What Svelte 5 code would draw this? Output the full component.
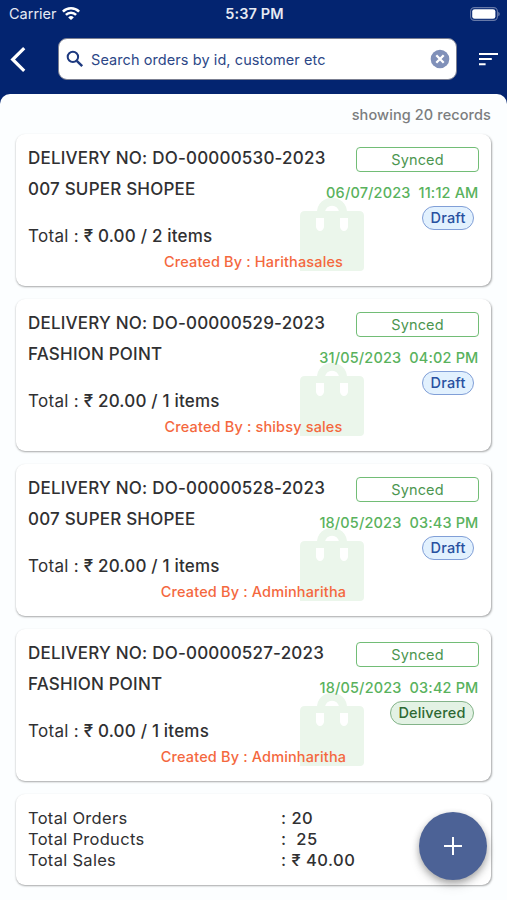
<script>
  const orders = [
    { no: 'DO-00000530-2023', customer: '007 SUPER SHOPEE', date: '06/07/2023', time: '11:12 AM', total: '0.00', items: 2, status: 'Draft', by: 'Harithasales' },
    { no: 'DO-00000529-2023', customer: 'FASHION POINT', date: '31/05/2023', time: '04:02 PM', total: '20.00', items: 1, status: 'Draft', by: 'shibsy sales' },
    { no: 'DO-00000528-2023', customer: '007 SUPER SHOPEE', date: '18/05/2023', time: '03:43 PM', total: '20.00', items: 1, status: 'Draft', by: 'Adminharitha' },
    { no: 'DO-00000527-2023', customer: 'FASHION POINT', date: '18/05/2023', time: '03:42 PM', total: '0.00', items: 1, status: 'Delivered', by: 'Adminharitha' }
  ];

  const totals = [
    { label: 'Total Orders', value: ': 20' },
    { label: 'Total Products', value: ':  25' },
    { label: 'Total Sales', value: ': ₹ 40.00' }
  ];
</script>

<div class="screen">
  <header>
    <div class="status-bar">
      <div class="carrier">
        <span>Carrier</span>
        <svg width="18" height="14" viewBox="0 0 18 14" fill="none" stroke="#fff" stroke-width="2.5">
          <path d="M.9 4.7a11.4 11.4 0 0 1 16.2 0" />
          <path d="M3.9 7.9a7.1 7.1 0 0 1 10.2 0" />
          <path d="M9 13.1 6.2 10.4a4 4 0 0 1 5.6 0z" fill="#fff" stroke="none" />
        </svg>
      </div>
      <span class="clock">5:37 PM</span>
      <svg class="battery" width="30" height="14" viewBox="0 0 30 14">
        <rect x="0.6" y="0.6" width="26.8" height="12.8" rx="3.8" fill="none" stroke="#6779a8" stroke-width="1.1" />
        <rect x="2.2" y="2.2" width="23.2" height="9.6" rx="2.4" fill="#fff" />
        <path d="M28.4 4.7c1.6.7 1.6 3.9 0 4.6z" fill="#8291b9" />
      </svg>
    </div>

    <div class="toolbar">
      <svg class="back" width="16" height="26" viewBox="0 0 16 26" fill="none" stroke="#fff" stroke-width="3.2">
        <path d="M14.2 2.2 2.7 13.5l11.5 11.3" />
      </svg>
      <div class="search">
        <svg width="18" height="18" viewBox="0 0 18 18" fill="none" stroke="#1d397f">
          <circle cx="6.9" cy="6.9" r="5.2" stroke-width="2" />
          <path d="m10.8 10.8 5.4 5.4" stroke-width="2.4" />
        </svg>
        <span class="placeholder">Search orders by id, customer etc</span>
        <svg width="20" height="20" viewBox="0 0 20 20">
          <circle cx="10" cy="10" r="9.3" fill="#8090b9" />
          <path d="m6.3 6.3 7.4 7.4m0-7.4-7.4 7.4" stroke="#fff" stroke-width="2.3" />
        </svg>
      </div>
      <svg class="sort" width="20" height="14" viewBox="0 0 20 14" fill="#fff">
        <path d="M0 .9h19v2H0zM0 6.1h12.8v2H0zM0 11.3h6.6v2H0z" />
      </svg>
    </div>
  </header>

  <main>
    <p class="count">showing 20 records</p>

    {#each orders as order}
      <article class="card">
        <svg class="bag" width="66" height="76" viewBox="0 0 66 76">
          <path d="M22 17c0-15 22-15 22 0" fill="none" stroke="#ebf6eb" stroke-width="8" />
          <path fill-rule="evenodd" fill="#ebf6eb" d="M6 15h54q5 0 5 5v51q0 4-4 4H1V20q0-5 5-5zM17 22v9q1 4 4 4t4-4v-9zM41 22v9q1 4 4 4t4-4v-9z" />
        </svg>
        <div class="row">
          <div class="info">
            <div class="line">DELIVERY NO: {order.no}</div>
            <div class="line customer">{order.customer}</div>
            <div class="line total"><span>Total :</span> ₹ {order.total} / {order.items} items</div>
          </div>
          <div class="meta">
            <div class="synced">Synced</div>
            <div class="date">{order.date}&nbsp; {order.time}</div>
            <div class="chip" class:delivered={order.status === 'Delivered'}>{order.status}</div>
          </div>
        </div>
        <div class="created">Created By : {order.by}</div>
      </article>
    {/each}

    <section class="card summary">
      {#each totals as row}
        <div class="label">{row.label}</div>
        <div class="value">{row.value}</div>
      {/each}
    </section>
  </main>

  <button class="fab" aria-label="Add order">
    <svg width="18" height="18" viewBox="0 0 18 18" stroke="#fff" stroke-width="2">
      <path d="M9 0v18M0 9h18" />
    </svg>
  </button>
</div>

<style>
  :global(body) {
    background: #032470;
  }

  .screen {
    position: relative;
    height: 900px;
    overflow: hidden;
    display: flex;
    flex-direction: column;
    font-family: Inter, 'Liberation Sans', sans-serif;
    background: #032470;
    color: #303032;
  }

  svg {
    display: block;
    flex: none;
  }

  header {
    height: 94px;
    flex: none;
  }

  /* ─── Status bar ─── */
  .status-bar {
    display: grid;
    grid-template-columns: 1fr auto 1fr;
    align-items: center;
    height: 27px;
    padding: 0 7px 0 9px;
    color: #e6eaf3;
    font-size: 14.5px;
  }

  .carrier {
    display: flex;
    align-items: center;
    gap: 5px;
  }

  .clock {
    font-weight: 600;
    letter-spacing: 0.1px;
  }

  .battery {
    justify-self: end;
  }

  /* ─── Toolbar ─── */
  .toolbar {
    display: flex;
    align-items: center;
    height: 42px;
    margin-top: 11px;
    padding: 0 8px 0 10px;
  }

  .search {
    display: flex;
    align-items: center;
    width: 399px;
    height: 42px;
    margin: 0 22px 0 32px;
    padding: 0 6px 0 7px;
    box-sizing: border-box;
    border: 1px solid #7b7f91;
    border-radius: 9px;
    background: #fff;
  }

  .placeholder {
    flex: 1;
    margin-left: 7px;
    font-size: 14.5px;
    letter-spacing: 0.08px;
    color: #2c4787;
    white-space: nowrap;
  }

  /* ─── List ─── */
  main {
    flex: 1;
    padding: 0 16px;
    border-radius: 10px 10px 0 0;
    background: #fcfeff;
  }

  .count {
    margin: 0;
    height: 40px;
    line-height: 41px;
    text-align: right;
    font-size: 14.5px;
    font-weight: 500;
    letter-spacing: 0.1px;
    color: #7b7d7e;
  }

  .card {
    position: relative;
    height: 152px;
    margin-bottom: 13px;
    padding: 0 12px;
    box-sizing: border-box;
    border-radius: 9px;
    background: #fff;
    box-shadow: 0.5px 1px 2px rgba(0, 0, 0, 0.34);
  }

  .bag {
    position: absolute;
    left: 283px;
    top: 62px;
  }

  .row {
    position: relative;
    display: flex;
    justify-content: space-between;
    height: 115px;
  }

  .info {
    width: 280px;
    padding-top: 13px;
    font-size: 17px;
    font-weight: 500;
    letter-spacing: 0.2px;
    white-space: nowrap;
  }

  .line {
    height: 22px;
    line-height: 22px;
  }

  .customer {
    margin-top: 9px;
  }

  .total {
    margin-top: 25px;
  }

  .total span {
    font-weight: 400;
    letter-spacing: 0.3px;
  }

  .meta {
    display: flex;
    flex-direction: column;
    align-items: flex-end;
    width: 160px;
    padding-top: 13px;
    font-size: 14.5px;
    letter-spacing: 0.15px;
  }

  .synced {
    width: 123px;
    height: 25px;
    line-height: 23px;
    box-sizing: border-box;
    border: 1.5px solid #72bd76;
    border-radius: 4px;
    text-align: center;
    color: #4c9650;
  }

  .date {
    height: 20px;
    margin: 11px 0.5px 0 0;
    line-height: 20px;
    font-weight: 500;
    color: #59b25d;
    white-space: nowrap;
  }

  .chip {
    height: 24px;
    margin: 3px 5px 0 0;
    padding: 0 7.5px;
    line-height: 21px;
    box-sizing: border-box;
    border: 1px solid #819fd7;
    border-radius: 12px;
    background: #e2f1fe;
    color: #2850a0;
    font-weight: 500;
  }

  .chip.delivered {
    border-color: #83b389;
    background: #e3f2e4;
    color: #2d6833;
  }

  .created {
    position: relative;
    height: 28px;
    line-height: 26px;
    text-align: center;
    font-size: 14.5px;
    font-weight: 500;
    letter-spacing: 0.15px;
    color: #f4683e;
  }

  /* ─── Summary ─── */
  .summary {
    display: grid;
    grid-template-columns: 253px 1fr;
    grid-auto-rows: 20.8px;
    height: 91px;
    margin: 0;
    padding-top: 14px;
    font-size: 16.5px;
    line-height: 20px;
    letter-spacing: 0.3px;
  }

  .value {
    font-weight: 500;
    letter-spacing: 0.5px;
    white-space: pre;
  }

  .fab {
    position: absolute;
    right: 20px;
    bottom: 20px;
    width: 68px;
    height: 68px;
    display: grid;
    place-items: center;
    padding: 0;
    border: 0;
    border-radius: 50%;
    background: #4c6296;
    box-shadow: 0 3px 7px rgba(0, 0, 0, 0.3), 0 6px 12px rgba(0, 0, 0, 0.1);
  }
</style>
